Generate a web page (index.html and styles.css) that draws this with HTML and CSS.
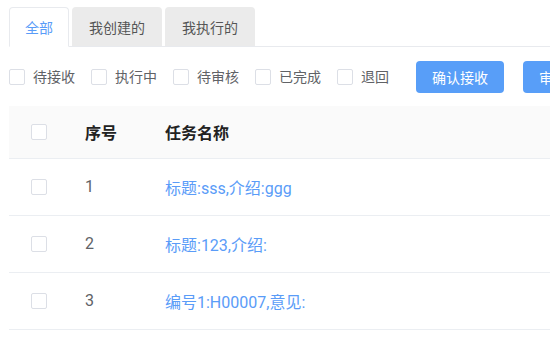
FILE: index.html
```html
<html lang="zh-CN">

<head>
  <meta charset="UTF-8">
  <meta name="viewport" content="width=device-width, initial-scale=1.0">
  <title>任务列表</title>
  <link rel="stylesheet" href="styles.css">
</head>

<body>
  <div class="main">
    <div class="tabs">
      <div class="tab active">全部</div>
      <div class="tab">我创建的</div>
      <div class="tab">我执行的</div>
    </div>

    <div class="filters">
      <label class="check"><span class="box"></span>待接收</label>
      <label class="check"><span class="box"></span>执行中</label>
      <label class="check"><span class="box"></span>待审核</label>
      <label class="check"><span class="box"></span>已完成</label>
      <label class="check"><span class="box"></span>退回</label>
      <button class="btn first">确认接收</button>
      <button class="btn">审核通过</button>
    </div>

    <table class="grid">
      <thead>
        <tr>
          <th class="col-check"><span class="box"></span></th>
          <th class="col-no">序号</th>
          <th class="col-name">任务名称</th>
        </tr>
      </thead>
      <tbody>
        <tr>
          <td class="col-check"><span class="box"></span></td>
          <td>1</td>
          <td><a class="link">标题:sss,介绍:ggg</a></td>
        </tr>
        <tr>
          <td class="col-check"><span class="box"></span></td>
          <td>2</td>
          <td><a class="link">标题:123,介绍:</a></td>
        </tr>
        <tr>
          <td class="col-check"><span class="box"></span></td>
          <td>3</td>
          <td><a class="link">编号1:H00007,意见:</a></td>
        </tr>
      </tbody>
    </table>
  </div>
</body>

</html>
```

FILE: styles.css
```css
html, body {
  margin: 0;
  overflow: hidden;
}

body {
  font-family: Roboto, "Noto Sans CJK SC", sans-serif;
  font-size: 14px;
  color: #606266;
  background: #fff;
}

.main {
  width: 900px;
  padding: 7px 0 0 9px;
}

.tabs {
  display: flex;
  gap: 3px;
  height: 39px;
  border-bottom: 1px solid #e8eaee;
}

.tab {
  display: flex;
  align-items: center;
  padding: 0 17px;
  height: 39px;
  background: #ebebeb;
  color: #555;
  border-radius: 4px 4px 0 0;
  box-sizing: border-box;
}

.tab.active {
  height: 40px;
  background: #fff;
  color: #5a9cf8;
  border: 1px solid #e8eaee;
  border-bottom: 1px solid #fff;
  padding: 0 15px;
}

.filters {
  display: flex;
  align-items: center;
  height: 58px;
  padding-top: 1px;
}

.check {
  display: flex;
  align-items: center;
  gap: 8px;
  margin-right: 16px;
  line-height: 20px;
}

.box {
  display: inline-block;
  width: 14px;
  height: 14px;
  border: 1px solid #dcdfe6;
  border-radius: 2px;
  background: #fff;
}

.btn {
  height: 32px;
  padding: 0 16px;
  border: none;
  border-radius: 4px;
  background: #589ef8;
  color: #fff;
  font-family: inherit;
  font-size: 14px;
}

.btn.first {
  margin-left: 11px;
  margin-right: 19px;
}

.grid {
  width: 100%;
  border-collapse: collapse;
}

.grid th {
  height: 52px;
  background: #fafafa;
  color: #222;
  font-weight: bold;
  text-align: left;
  padding: 0 16px;
  border-bottom: 1px solid #ebeef2;
}

.grid td {
  height: 57px;
  padding: 0 16px;
  border-bottom: 1px solid #ebeef2;
}

.grid .col-check {
  width: 60px;
  padding: 0;
  text-align: center;
  box-sizing: border-box;
}

.grid .col-check .box {
  vertical-align: middle;
}

.grid .col-no {
  width: 48px;
}

.link {
  color: #5a9cf8;
}
```
